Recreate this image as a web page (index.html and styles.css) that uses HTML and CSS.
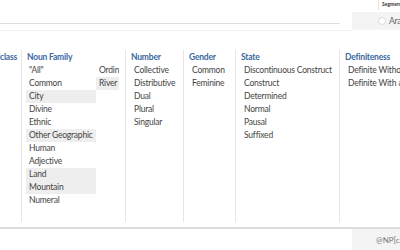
FILE: index.html
```html
<!DOCTYPE html>
<html lang="en">
<head>
  <meta charset="UTF-8">
  <meta name="viewport" content="width=device-width, initial-scale=1.0">
  <title>Search</title>
  <link rel="stylesheet" href="styles.css">
</head>
<body>
  <div class="top">
    <div class="search">
      <div class="search-input"></div>
    </div>
    <div class="segment">
      <div class="segment-head"><span>Segmentation</span></div>
      <label class="segment-option"><span class="radio"></span>Aramaic</label>
    </div>
  </div>
  <div class="ruler"></div>

  <div class="filters">
    <div class="column col-class">
      <div class="heading">Wordclass</div>
      <ul class="items">
        <li>Noun</li>
        <li>Verb</li>
      </ul>
    </div>
    <div class="column col-family">
      <div class="heading">Noun Family</div>
      <ul class="items grid">
        <li>"All"</li>
        <li>Common</li>
        <li class="on">City</li>
        <li>Divine</li>
        <li>Ethnic</li>
        <li class="on">Other Geographic</li>
        <li>Human</li>
        <li>Adjective</li>
        <li class="on">Land</li>
        <li class="on">Mountain</li>
        <li>Numeral</li>
        <li>Ordinal</li>
        <li class="on">River</li>
      </ul>
    </div>
    <div class="column col-number">
      <div class="heading">Number</div>
      <ul class="items">
        <li>Collective</li>
        <li>Distributive</li>
        <li>Dual</li>
        <li>Plural</li>
        <li>Singular</li>
      </ul>
    </div>
    <div class="column col-gender">
      <div class="heading">Gender</div>
      <ul class="items">
        <li>Common</li>
        <li>Feminine</li>
      </ul>
    </div>
    <div class="column col-state">
      <div class="heading">State</div>
      <ul class="items">
        <li>Discontinuous Construct</li>
        <li>Construct</li>
        <li>Determined</li>
        <li>Normal</li>
        <li>Pausal</li>
        <li>Suffixed</li>
      </ul>
    </div>
    <div class="column col-def">
      <div class="heading">Definiteness</div>
      <ul class="items">
        <li>Definite Without ה</li>
        <li>Definite With ה</li>
      </ul>
    </div>
  </div>

  <div class="footer">
    <div class="query">@NP[case="genitive"]</div>
  </div>
</body>
</html>
```

FILE: styles.css
```css
body {
  margin: 0;
  width: 400px;
  height: 250px;
  overflow: hidden;
  background: white;
  color: #444;
  font-family: Lato, "Open Sans", sans-serif;
  font-size: 8.5px;
  letter-spacing: -0.2px;
}

ul {
  list-style: none;
  margin: 0;
  padding: 0;
}

.top {
  display: flex;
  height: 30px;
}

.search {
  flex: 1;
  padding-right: 12px;
}

.search-input {
  height: 23px;
  border-bottom: 1px solid #ddd;
}

.segment {
  width: 48px;
  display: flex;
  flex-direction: column;
}

.segment-head {
  height: 12px;
  padding-left: 26px;
  overflow: hidden;
}

.segment-head span {
  display: block;
  height: 10px;
  padding-left: 3px;
  border-left: 1px solid #e4e4e4;
  font-size: 5px;
  font-weight: bold;
  line-height: 8px;
  letter-spacing: 0;
  color: #333;
  white-space: nowrap;
}

.segment-option {
  flex: 1;
  display: flex;
  align-items: center;
  gap: 3px;
  padding-left: 26px;
  background: #f4f4f4;
  white-space: nowrap;
  color: #666;
}

.radio {
  flex: none;
  width: 6px;
  height: 6px;
  border: 1px solid #ddd;
  border-radius: 50%;
  background: white;
}

.ruler {
  height: 0;
  width: 352px;
  border-top: 1px solid #f0f0f0;
}

.filters {
  display: flex;
  height: 172px;
  margin-top: 19px;
  margin-left: -40px;
}

.column {
  flex: none;
  padding: 0 4px 0 5px;
  border-left: 1px solid #e6e6e6;
  overflow: hidden;
}

.col-class {
  width: 52px;
  border-left: none;
  text-align: right;
}

.col-family { width: 94px; }
.col-number { width: 48px; }
.col-gender { width: 42px; }
.col-state { width: 94px; }
.col-def { width: 80px; }

.heading {
  height: 14px;
  line-height: 14px;
  font-weight: bold;
  color: #3a68a0;
  white-space: nowrap;
}

.items li {
  height: 13px;
  line-height: 13px;
  padding: 0 3px;
  white-space: nowrap;
  overflow: hidden;
}

.items li.on {
  background: #eeeeee;
}

.items.grid {
  display: grid;
  grid-auto-flow: column;
  grid-template-rows: repeat(11, 13px);
  grid-template-columns: 70px 23px;
  margin-left: -1px;
}

.col-class .items {
  visibility: hidden;
}

.footer {
  display: flex;
  justify-content: flex-end;
  height: 22px;
  margin-top: 5px;
  border-top: 2px solid #ddd;
}

.query {
  width: 24px;
  padding-left: 24px;
  background: #f4f4f4;
  line-height: 22px;
  font-size: 8px;
  letter-spacing: 0;
  color: #777;
  white-space: nowrap;
  overflow: hidden;
}
```
